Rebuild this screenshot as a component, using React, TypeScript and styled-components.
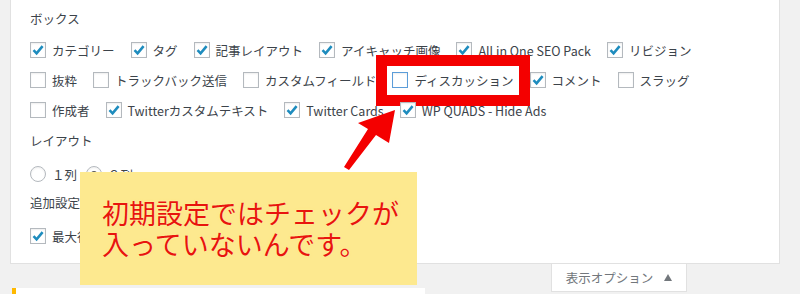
import styled, { createGlobalStyle, css } from 'styled-components';

const GlobalStyle = createGlobalStyle`
  body {
    margin: 0;
    background: #f1f1f1;
    font-family: "Noto Sans CJK JP", "Noto Sans", sans-serif;
  }
`;

const Page = styled.div`
  position: relative;
  width: 800px;
  height: 294px;
  overflow: hidden;
  padding-left: 10px;
  box-sizing: border-box;
`;

const Panel = styled.section`
  width: 770px;
  box-sizing: border-box;
  background: #fff;
  border: 1px solid #e1e1e1;
  border-top: none;
  padding: 3px 19px 14px;
`;

const SectionTitle = styled.h5`
  margin: 0;
  height: 32px;
  line-height: 32px;
  font-size: 12.5px;
  font-weight: 400;
  color: #3c434a;
`;

const OptionRow = styled.div<{ $gap?: number; $shift?: number }>`
  display: flex;
  align-items: center;
  height: 30px;
  gap: ${(p) => p.$gap ?? 16}px;
  margin-top: ${(p) => p.$shift ?? 0}px;
  margin-bottom: ${(p) => -(p.$shift ?? 0)}px;
`;

const Option = styled.label<{ $highlight?: boolean }>`
  display: flex;
  align-items: center;
  gap: 6px;
  font-size: 12.5px;
  color: #3c434a;
  white-space: nowrap;

  ${(p) =>
    p.$highlight &&
    css`
      outline: 11px solid #f40000;
      outline-offset: 5px;
    `}
`;

const Box = styled.span<{ $focused?: boolean; $round?: boolean }>`
  width: 16px;
  height: 16px;
  box-sizing: border-box;
  flex: none;
  display: flex;
  align-items: center;
  justify-content: center;
  background: #fff;
  border: 1px solid ${(p) => (p.$focused ? '#5b9dd9' : '#b4b9be')};
  border-radius: ${(p) => (p.$round ? '50%' : '0')};
  box-shadow: inset 0 1px 2px rgba(0, 0, 0, 0.07);
`;

const Dot = styled.span`
  width: 6px;
  height: 6px;
  border-radius: 50%;
  background: #555;
`;

const TabBar = styled.div`
  width: 770px;
  height: 24px;
  box-sizing: border-box;
  padding-right: 93px;
  display: flex;
  justify-content: flex-end;
  align-items: flex-start;
`;

const ScreenOptionsTab = styled.button`
  flex: none;
  width: 136px;
  height: 28px;
  padding: 0;
  background: #fff;
  border: 1px solid #e1e1e1;
  border-top: none;
  font-family: inherit;
  font-size: 12.5px;
  color: #72777c;
  display: flex;
  align-items: center;
  justify-content: center;
  gap: 11px;
`;

const UpArrow = styled.span`
  width: 0;
  height: 0;
  border-left: 4px solid transparent;
  border-right: 4px solid transparent;
  border-bottom: 7px solid #72777c;
`;

const Notice = styled.div`
  margin-left: 2px;
  width: 413px;
  height: 30px;
  box-sizing: border-box;
  background: #fff;
  border-left: 4px solid #ffb900;
`;

const NoteCard = styled.div`
  position: absolute;
  left: 80px;
  top: 172px;
  width: 337px;
  height: 113px;
  box-sizing: border-box;
  padding: 25px 0 0 22px;
  background: #fde98f;
  font-size: 27px;
  line-height: 31px;
  color: #e8150d;
  text-shadow: 0 0 1px #fff7c2, 0 0 2px #fff3a0, 0 0 3px #ffe27a;
`;

const Pointer = styled.svg`
  position: absolute;
  left: 340px;
  top: 105px;
`;

type Item = { label: string; checked?: boolean; highlight?: boolean };

const rows: Item[][] = [
  [
    { label: 'カテゴリー', checked: true },
    { label: 'タグ', checked: true },
    { label: '記事レイアウト', checked: true },
    { label: 'アイキャッチ画像', checked: true },
    { label: 'All in One SEO Pack', checked: true },
    { label: 'リビジョン', checked: true },
  ],
  [
    { label: '抜粋' },
    { label: 'トラックバック送信' },
    { label: 'カスタムフィールド' },
    { label: 'ディスカッション', highlight: true },
    { label: 'コメント', checked: true },
    { label: 'スラッグ' },
  ],
  [
    { label: '作成者' },
    { label: 'Twitterカスタムテキスト', checked: true },
    { label: 'Twitter Cards', checked: true },
    { label: 'WP QUADS - Hide Ads', checked: true },
  ],
];

function Check() {
  return (
    <svg width="14" height="14" viewBox="0 0 14 14">
      <path d="M2.5 7.2 L5.6 10.3 L11.6 3.2" fill="none" stroke="#1e8cbe" strokeWidth="2.6" />
    </svg>
  );
}

function CheckOption({ label, checked, highlight }: Item) {
  return (
    <Option $highlight={highlight}>
      <Box $focused={highlight}>{checked && <Check />}</Box>
      {label}
    </Option>
  );
}

export default function App() {
  return (
    <Page>
      <GlobalStyle />
      <Panel>
        <SectionTitle>ボックス</SectionTitle>
        {rows.map((row, i) => (
          <OptionRow key={i}>
            {row.map((item) => (
              <CheckOption key={item.label} {...item} />
            ))}
          </OptionRow>
        ))}
        <SectionTitle>レイアウト</SectionTitle>
        <OptionRow $gap={9} $shift={2}>
          <Option>
            <Box $round />
            １列
          </Option>
          <Option>
            <Box $round>
              <Dot />
            </Box>
            ２列
          </Option>
        </OptionRow>
        <SectionTitle>追加設定</SectionTitle>
        <OptionRow $shift={2}>
          <CheckOption label="最大行数を表示する" checked />
        </OptionRow>
      </Panel>
      <TabBar>
        <ScreenOptionsTab type="button">
          表示オプション
          <UpArrow />
        </ScreenOptionsTab>
      </TabBar>
      <Notice />

      <Pointer width="60" height="70" viewBox="0 0 60 70">
        <polygon points="55,5 49,38 36,30 9,65 4,62 28,24 18,18" fill="#f40000" />
      </Pointer>
      <NoteCard>
        初期設定ではチェックが
        <br />
        入っていないんです。
      </NoteCard>
    </Page>
  );
}
